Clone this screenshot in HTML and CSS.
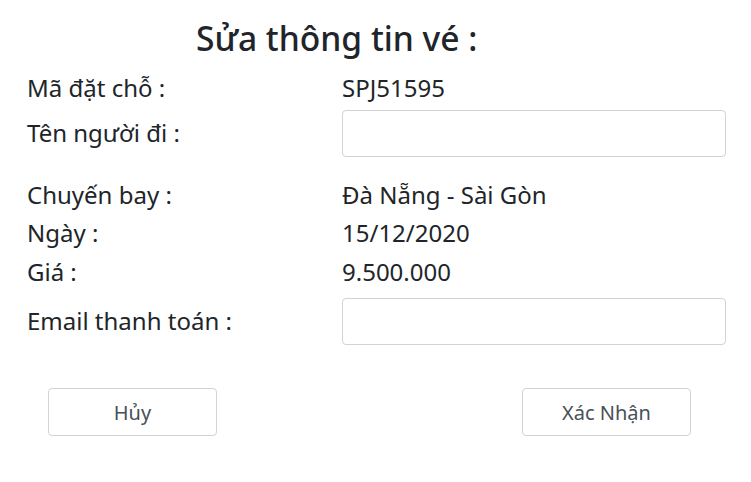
FILE: index.html
```html
<!DOCTYPE html>
<html lang="vi">
<head>
<meta charset="utf-8">
<title>Sửa thông tin vé</title>
<link rel="stylesheet" href="styles.css">
</head>
<body>
<div class="page">
  <h2 class="title">Sửa thông tin vé :</h2>
  <div class="row r1"><div class="label">Mã đặt chỗ :</div><div class="value">SPJ51595</div></div>
  <div class="row r2"><div class="label">Tên người đi :</div><div class="value"><input class="field" type="text"></div></div>
  <div class="row r3"><div class="label">Chuyến bay :</div><div class="value">Đà Nẵng - Sài Gòn</div></div>
  <div class="row r4"><div class="label">Ngày :</div><div class="value">15/12/2020</div></div>
  <div class="row r5"><div class="label">Giá :</div><div class="value">9.500.000</div></div>
  <div class="row r6"><div class="label">Email thanh toán :</div><div class="value"><input class="field" type="text"></div></div>
  <div class="actions">
    <button class="btn btn-cancel" type="button">Hủy</button>
    <button class="btn btn-ok" type="button">Xác Nhận</button>
  </div>
</div>
</body>
</html>
```
FILE: styles.css
```css
* { box-sizing: border-box; }
html, body { margin: 0; padding: 0; background: #fff; }
body {
  font-family: "Noto Sans", "Open Sans", sans-serif;
  color: #212529;
  width: 751px;
  height: 482px;
  overflow: hidden;
}
.page { padding: 0 25px 0 27px; }
.title {
  margin: 0 0 0 169px;
  height: 68px;
  padding-top: 8px;
  line-height: 60px;
  font-size: 33.6px;
  font-weight: 500;
}
.row {
  display: grid;
  grid-template-columns: 315px 1fr;
  align-items: center;
  font-size: 24px;
  line-height: 1.2;
}
.r1 { height: 40px; }
.r2 { height: 47px; margin-top: 2px; }
.r3 { height: 38px; margin-top: 19px; }
.r4 { height: 39px; }
.r5 { height: 39px; }
.r6 { height: 47px; margin-top: 6px; }
.field {
  display: block;
  width: 100%;
  height: 47px;
  border: 1px solid #ced4da;
  border-radius: 4px;
  background: #fff;
  font: inherit;
  padding: 0 12px;
}
.actions {
  display: flex;
  justify-content: space-between;
  margin-top: 43px;
  padding: 0 35px 0 21px;
}
.btn {
  width: 169px;
  height: 48px;
  border: 1px solid #ced4da;
  border-radius: 4px;
  background: #fff;
  color: #495057;
  font-family: "Noto Sans", "Open Sans", sans-serif;
  font-size: 20px;
  padding: 0;
}
```
